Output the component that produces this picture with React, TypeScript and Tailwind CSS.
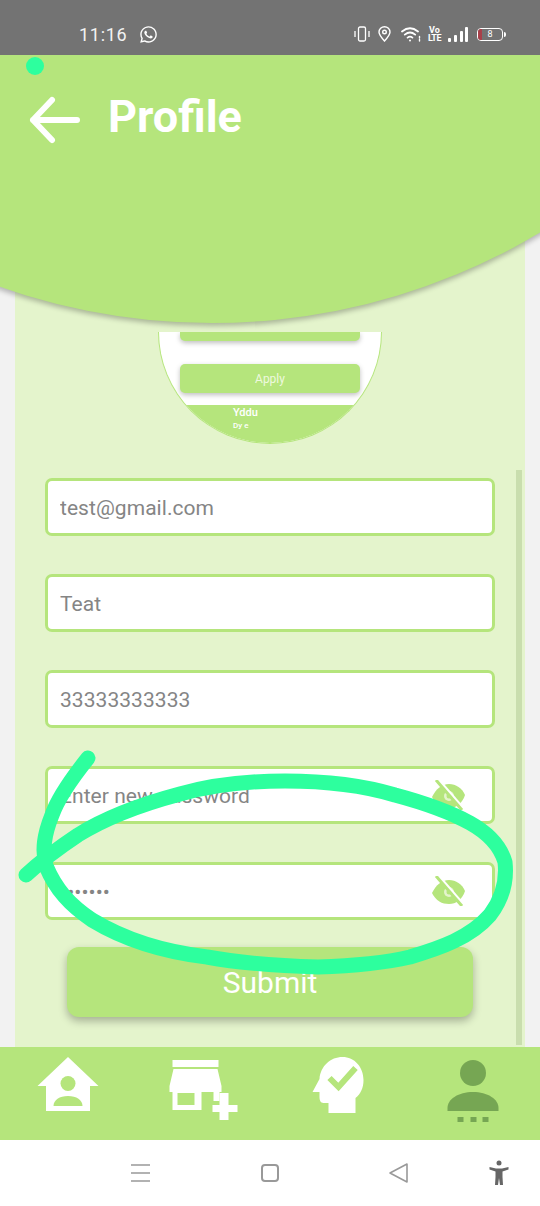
import { FaWhatsapp } from "react-icons/fa";

const font = "font-['Roboto',sans-serif]";

function EyeOff() {
  return (
    <svg className="shrink-0" width="36" height="30" viewBox="0 0 36 30">
      <path d="M1 17C5 9 11 4 18 4s13 4 16 11c-3 9-9 13-16 13S5 25 1 17Z" fill="#b5e57c" />
      <circle cx="18" cy="16" r="5" fill="#e4f4cc" />
      <circle cx="18" cy="16" r="2.500" fill="#b5e57c" />
      <path d="M7 0 33 30" stroke="#fff" strokeWidth="4" />
      <path d="M5 0 31 30" stroke="#b5e57c" strokeWidth="3" />
    </svg>
  );
}

function Field({ value, type = "text", placeholder, eye }: { value?: string; type?: string; placeholder?: string; eye?: boolean }) {
  return (
    <div className="flex h-[58px] items-center rounded-[7px] border-[3px] border-[#b5e57c] bg-white pl-[12px] pr-[25px]">
      <input
        readOnly
        type={type}
        defaultValue={value}
        placeholder={placeholder}
        className={`${font} mt-[3px] w-full min-w-0 bg-transparent text-[21px] tracking-[0.05px] text-[#858585] outline-none placeholder:text-[#858585]`}
      />
      {eye && <EyeOff />}
    </div>
  );
}

function StatusIcons() {
  return (
    <div className="flex items-center text-white">
      <svg width="16" height="16" viewBox="0 0 16 16" fill="none" stroke="#fff" className="mr-[8px]">
        <rect x="4.5" y="1" width="7" height="14" rx="1.5" strokeWidth="1.3" />
        <path d="M1 5v6M15 5v6" strokeWidth="1.3" />
      </svg>
      <svg width="13" height="16" viewBox="0 0 13 16" fill="none" stroke="#fff" strokeWidth="1.4" className="mr-[10px]">
        <path d="M6.5 15C3 11 1 8.6 1 6.2a5.5 5.5 0 0 1 11 0C12 8.6 10 11 6.5 15Z" />
        <circle cx="6.5" cy="6" r="1.8" />
      </svg>
      <svg width="20" height="15" viewBox="0 0 20 15" fill="none" stroke="#fff" strokeWidth="1.8" strokeLinecap="round" className="mr-[8px]">
        <path d="M1 4.5c5-4 11-4 16 0M3.8 7.6c3.4-2.7 7-2.7 10.4 0M6.6 10.6c1.6-1.2 3.2-1.2 4.8 0" />
        <circle cx="9" cy="13.4" r="1" fill="#fff" stroke="none" />
        <path d="M18.5 9.5v1.5M18.5 12.5V14" strokeWidth="1.4" />
      </svg>
      <div className={`${font} mr-[8px] flex w-[11px] flex-col items-center text-[9px] font-bold leading-[8px] text-white`}>
        <span>Vo</span>
        <span className="tracking-[-0.5px]">LTE</span>
      </div>
      <svg width="20" height="15" viewBox="0 0 20 15" fill="#fff" className="mr-[9px]">
        <rect x="0" y="11" width="3" height="4" rx="1" />
        <rect x="6" y="8" width="3" height="7" rx="1" />
        <rect x="12" y="4" width="3" height="11" rx="1" />
        <rect x="17" y="0" width="3" height="15" rx="1" />
      </svg>
      <div className="relative flex h-[13px] w-[26px] items-center justify-center overflow-hidden rounded-[4px] border border-white">
        <span className="absolute bottom-0 left-0 top-0 w-[4px] bg-[#a8404a]" />
        <span className={`${font} text-[9px] leading-none text-white`}>8</span>
      </div>
      <span className="ml-[1px] h-[5px] w-[2px] rounded-r bg-white" />
    </div>
  );
}

export default function App() {
  return (
    <div className="relative flex h-[1206px] w-[540px] flex-col overflow-hidden bg-[#f2f2f2]">
      <header className="flex h-[55px] shrink-0 items-center bg-[#737373] pl-[79px] pr-[34px] pt-[13px]">
        <span className={`${font} text-[18px] tracking-[0.7px] text-[#f2f2f2]`}>11:16</span>
        <FaWhatsapp className="ml-[12px] text-white" size={19} />
        <div className="ml-auto">
          <StatusIcons />
        </div>
      </header>

      <main className="relative flex h-[992px] shrink-0 flex-col overflow-hidden">
        <div className="mx-[15px] flex h-[992px] flex-col bg-[#e4f4cc] pt-[277px]">
          <div className="relative flex h-[715px] flex-col overflow-hidden">
            <div className="mx-auto flex h-[112px] w-[224px] flex-col overflow-hidden rounded-b-[112px] border-x border-b border-[#b5e57c] bg-white">
              <div className="mx-auto h-[9px] w-[180px] shrink-0 rounded-b-[5px] bg-[#b5e57c] shadow-[0_2px_5px_rgba(0,0,0,0.25)]" />
              <div className={`${font} mx-auto mt-[23px] flex h-[29px] w-[180px] shrink-0 items-center justify-center rounded-[5px] bg-[#b5e57c] text-[12px] text-[#eef9df] shadow-[0_2px_5px_rgba(0,0,0,0.25)]`}>
                Apply
              </div>
              <div className={`${font} mt-[12px] flex flex-1 flex-col bg-[#b5e57c] pl-[74px] pt-[1px] font-medium text-white`}>
                <span className="text-[11px] leading-[13px]">Yddu</span>
                <span className="text-[8px] leading-[13px]">Dy e</span>
              </div>
            </div>

            <div className="mx-[30px] mt-[34px] flex flex-col gap-[38px]">
              <Field value="test@gmail.com" />
              <Field value="Teat" />
              <Field value="33333333333" />
              <Field placeholder="Enter new password" eye />
              <Field value="pass123" type="password" eye />
            </div>

            <div className={`${font} mx-[52px] mt-[27px] flex h-[70px] items-center justify-center rounded-[12px] bg-[#b5e57c] text-[30px] text-white shadow-[0_4px_8px_rgba(0,0,0,0.28)]`}>
              Submit
            </div>

            <div className="absolute bottom-[2px] right-[3px] h-[575px] w-[6px] bg-[#c9deae]" />
          </div>
        </div>

        {/* Curved header lying over the content */}
        <div className="absolute left-[-428px] top-[-1012px] h-[1280px] w-[1280px] rounded-full bg-[#b5e57c] shadow-[0_3px_5px_rgba(0,0,0,0.25)]" />
        <div className="absolute left-0 top-0 flex items-start pl-[27px] pt-[38px]">
          <svg width="54" height="54" viewBox="0 0 54 54" fill="none" stroke="#fff" strokeWidth="6" strokeLinecap="round" strokeLinejoin="round">
            <path d="M6 27h44M25 7 6 27l19 20" />
          </svg>
          <span className={`${font} ml-[27px] mt-[-3px] text-[45px] font-bold leading-[54px] text-white`}>Profile</span>
        </div>
      </main>

      <nav className="grid h-[93px] shrink-0 grid-cols-4 items-center bg-[#b5e57c]">
        <svg className="mx-auto" width="90" height="90" viewBox="22.5 1049 90 90">
          <path d="M67.5 1057 98 1086h-8.5v25h-44v-25H37Z" fill="#fff" />
          <circle cx="67.5" cy="1083.5" r="7.5" fill="#b5e57c" />
          <path d="M53 1106c0-6 6-10 14.500-10s14.500 4 14.500 10Z" fill="#b5e57c" />
        </svg>
        <svg className="mx-auto" width="90" height="90" viewBox="157.5 1049 90 90">
          <path d="M172 1060h46v7h-46ZM173 1069h44l4 17v6h-2v9h-6v-9h-12v18h-29v-18h-3v-6ZM177 1093v12h17v-12Z" fill="#fff" fillRule="evenodd" />
          <path d="M212 1105h7v-12h9v12h9v7h-9v8h-9v-8h-7Z" fill="#fff" />
        </svg>
        <svg className="mx-auto" width="90" height="90" viewBox="292.5 1049 90 90">
          <path d="M342 1057C354 1057 363 1067 363 1080C363 1088 360 1094 355 1098V1113H328V1103H323C320 1103 319 1100 319 1097V1092H312L319 1079C320 1066 330 1057 342 1057Z" fill="#fff" />
          <path d="m329 1078 9 9 17-19" fill="none" stroke="#b5e57c" strokeWidth="6" />
        </svg>
        <svg className="mx-auto" width="90" height="90" viewBox="427.5 1049 90 90" fill="#76a653">
          <circle cx="472.500" cy="1073" r="13" />
          <path d="M447 1111v-3c0-9 11-16 25.500-16s25.500 7 25.500 16v3Z" />
          <path d="M457 1117h6v5h-6ZM470 1117h6v5h-6ZM482 1117h6v5h-6Z" />
        </svg>
      </nav>

      <footer className="relative flex h-[66px] shrink-0 items-center bg-white">
        <svg className="absolute left-[130px] top-[23px]" width="22" height="20" viewBox="0 0 22 20" stroke="#999" strokeWidth="1.6">
          <path d="M1 2h19M1 10h19M1 18h19" />
        </svg>
        <span className="absolute left-[261px] top-[24px] h-[18px] w-[18px] rounded-[4px] border-2 border-[#999]" />
        <svg className="absolute left-[389px] top-[23px]" width="20" height="20" viewBox="0 0 20 20" fill="none" stroke="#999" strokeWidth="1.6" strokeLinejoin="round">
          <path d="M18 1v18L1 10Z" />
        </svg>
        <svg className="absolute left-[489px] top-[20px]" width="20" height="26" viewBox="0 0 20 26" fill="#666">
          <circle cx="10" cy="3" r="2.500" />
          <path d="M0.500 7 7 8.500h6L19.500 7v2.500l-6 2V17l.5 8h-3l-1-7-1 7H6l.5-8v-5.500l-6-2Z" />
        </svg>
      </footer>

      {/* Hand-drawn annotation over the screenshot */}
      <svg className="pointer-events-none absolute left-0 top-0" width="540" height="1206" viewBox="0 0 540 1206" fill="none">
        <circle cx="35" cy="66" r="9" fill="#2dff9e" />
        <path
          d="M88 758C72 778 58 798 52 815C44 835 42 850 46 866C56 890 70 905 92 920C125 940 165 952 207 957C245 964 285 966 318 967C350 966 380 964 410 957C440 948 470 938 490 915C503 898 507 880 505 862C500 845 488 833 470 823C450 812 425 803 395 795C365 786 325 781 285 781C250 781 215 784 180 794C150 802 110 815 78 835C60 847 40 862 26 875"
          stroke="#2dff9e"
          strokeWidth="15"
          strokeLinecap="round"
          strokeLinejoin="round"
        />
      </svg>
    </div>
  );
}
